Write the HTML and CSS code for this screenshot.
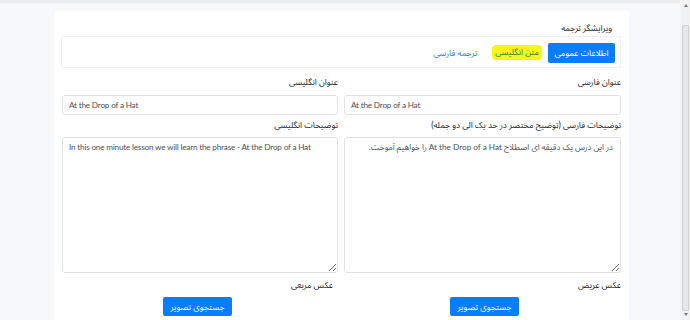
FILE: index.html
```html
<!DOCTYPE html>
<html lang="fa">
<head>
<meta charset="utf-8">
<title>ویرایشگر ترجمه</title>
<link rel="stylesheet" href="styles.css">
</head>
<body>
<div class="page">
  <div class="main">
    <div class="topbar"></div>
    <div class="card" dir="rtl">
      <div class="card-title">ویرایشگر ترجمه</div>
      <div class="tabs">
        <button class="btn btn-primary tab-btn" type="button">اطلاعات عمومی</button>
        <a class="tab-link tab-mark" href="#">متن انگلیسی</a>
        <a class="tab-link" href="#">ترجمه فارسی</a>
      </div>
      <div class="form-grid">
        <div class="field">
          <label class="lbl">عنوان فارسی</label>
          <input class="ctrl en" type="text" dir="ltr" value="At the Drop of a Hat">
        </div>
        <div class="field">
          <label class="lbl">عنوان انگلیسی</label>
          <input class="ctrl en" type="text" dir="ltr" value="At the Drop of a Hat">
        </div>
        <div class="field">
          <label class="lbl lbl-2">توضیحات فارسی (توضیح مختصر در حد یک الی دو جمله)</label>
          <textarea class="ctrl area area-fa" dir="ltr">در این درس یک دقیقه ای اصطلاح At the Drop of a Hat را خواهیم آموخت.</textarea>
        </div>
        <div class="field">
          <label class="lbl lbl-2">توضیحات انگلیسی</label>
          <textarea class="ctrl area en" dir="ltr">In this one minute lesson we will learn the phrase - At the Drop of a Hat</textarea>
        </div>
      </div>
      <div class="img-grid">
        <div class="img-col">
          <div class="lbl lbl-3">عکس عریض</div>
          <div class="img-btn-wrap"><button class="btn btn-primary img-btn" type="button">جستجوی تصویر</button></div>
        </div>
        <div class="img-col">
          <div class="lbl lbl-3">عکس مربعی</div>
          <div class="img-btn-wrap"><button class="btn btn-primary img-btn" type="button">جستجوی تصویر</button></div>
        </div>
      </div>
    </div>
  </div>
  <div class="scrollbar">
    <div class="sb-arrow sb-up"></div>
    <div class="sb-thumb"></div>
    <div class="sb-arrow sb-down"></div>
  </div>
</div>
</body>
</html>
```

FILE: styles.css
```css
html, body {
  margin: 0;
  padding: 0;
  height: 320px;
  overflow: hidden;
  background: #f7f8fa;
  font-family: Lato, "Noto Sans Arabic", "DejaVu Sans", sans-serif;
  color: #212529;
}

.page {
  display: flex;
  height: 320px;
}

.main {
  flex: 1;
  min-width: 0;
}

.topbar {
  height: 3px;
  background: #ededed;
}

.card {
  margin: 8px 0 0 54px;
  width: 575px;
  height: 320px;
  background: #fff;
  border-radius: 2px;
  box-sizing: border-box;
  padding: 0 8px 0 7px;
}

.card-title {
  font-size: 8.5px;
  line-height: 14px;
  padding: 10px 9px 1px 0;
  height: 14px;
}

.tabs {
  display: flex;
  align-items: center;
  height: 30px;
  border: 1px solid #efefef;
  border-radius: 2px;
  padding: 0 5px;
}

.btn {
  font-family: inherit;
  border: 0;
  border-radius: 2px;
  cursor: pointer;
  padding: 0;
}

.btn-primary {
  background: #0a7cff;
  color: #fff;
}

.tab-btn {
  width: 67px;
  height: 20px;
  font-size: 8.5px;
  margin-top: 1px;
}

.tab-link {
  font-size: 8.5px;
  text-decoration: none;
  color: #2f7cf6;
}

.tab-mark {
  margin-right: 6px;
  padding: 0 3px;
  height: 15px;
  line-height: 15px;
  background: #f6f619;
  border-radius: 4px;
  color: #4b7a1e;
  margin-top: 1px;
}

.tab-mark + .tab-link {
  margin-right: 15px;
  margin-top: 1px;
}

.form-grid {
  display: grid;
  grid-template-columns: 277px 276px;
  column-gap: 6px;
  padding: 0 0 0 1px;
}

.field {
  display: flex;
  flex-direction: column;
}

.lbl {
  font-size: 8.5px;
  line-height: 14px;
  margin: 7px 0 6px;
  color: #212529;
}

.lbl-2 {
  margin-top: 3px;
  margin-bottom: 5px;
}

.ctrl {
  box-sizing: border-box;
  border: 1px solid #dfe2e6;
  border-radius: 3px;
  background: #fff;
  color: #495057;
  font-family: Lato, "Noto Sans Arabic", "DejaVu Sans", sans-serif;
  font-size: 8.2px;
  margin: 0;
  outline: none;
}

.en {
  letter-spacing: -0.2px;
}

input.ctrl {
  height: 20px;
  padding: 0 6px;
  text-align: left;
}

.area {
  height: 136px;
  padding: 3px 6px;
  line-height: 12px;
  text-align: left;
  resize: vertical;
}

.area-fa {
  text-align: right;
  unicode-bidi: plaintext;
  padding-right: 7px;
}

.img-grid {
  display: grid;
  grid-template-columns: 273px 271px;
  column-gap: 15px;
  padding-left: 1px;
}

.lbl-3 {
  margin: 5px 0 5px;
}

.img-btn-wrap {
  display: flex;
  justify-content: center;
}

.img-btn {
  width: 69px;
  height: 19px;
  font-size: 8.5px;
}

.scrollbar {
  width: 9px;
  height: 320px;
  background: #f1f1f1;
  display: flex;
  flex-direction: column;
  align-items: center;
  border-left: 1px solid #f4f4f4;
}

.sb-arrow {
  width: 0;
  height: 0;
  border-left: 2px solid transparent;
  border-right: 2px solid transparent;
}

.sb-up {
  margin-top: 4px;
  border-bottom: 3px solid #7a7a7a;
}

.sb-down {
  margin-top: 2px;
  border-top: 3px solid #7a7a7a;
}

.sb-thumb {
  margin-top: 18px;
  width: 7px;
  height: 286px;
  box-sizing: border-box;
  background: #e6e6e6;
  border: 1px solid #d0d0d0;
  border-radius: 1px;
}
```
